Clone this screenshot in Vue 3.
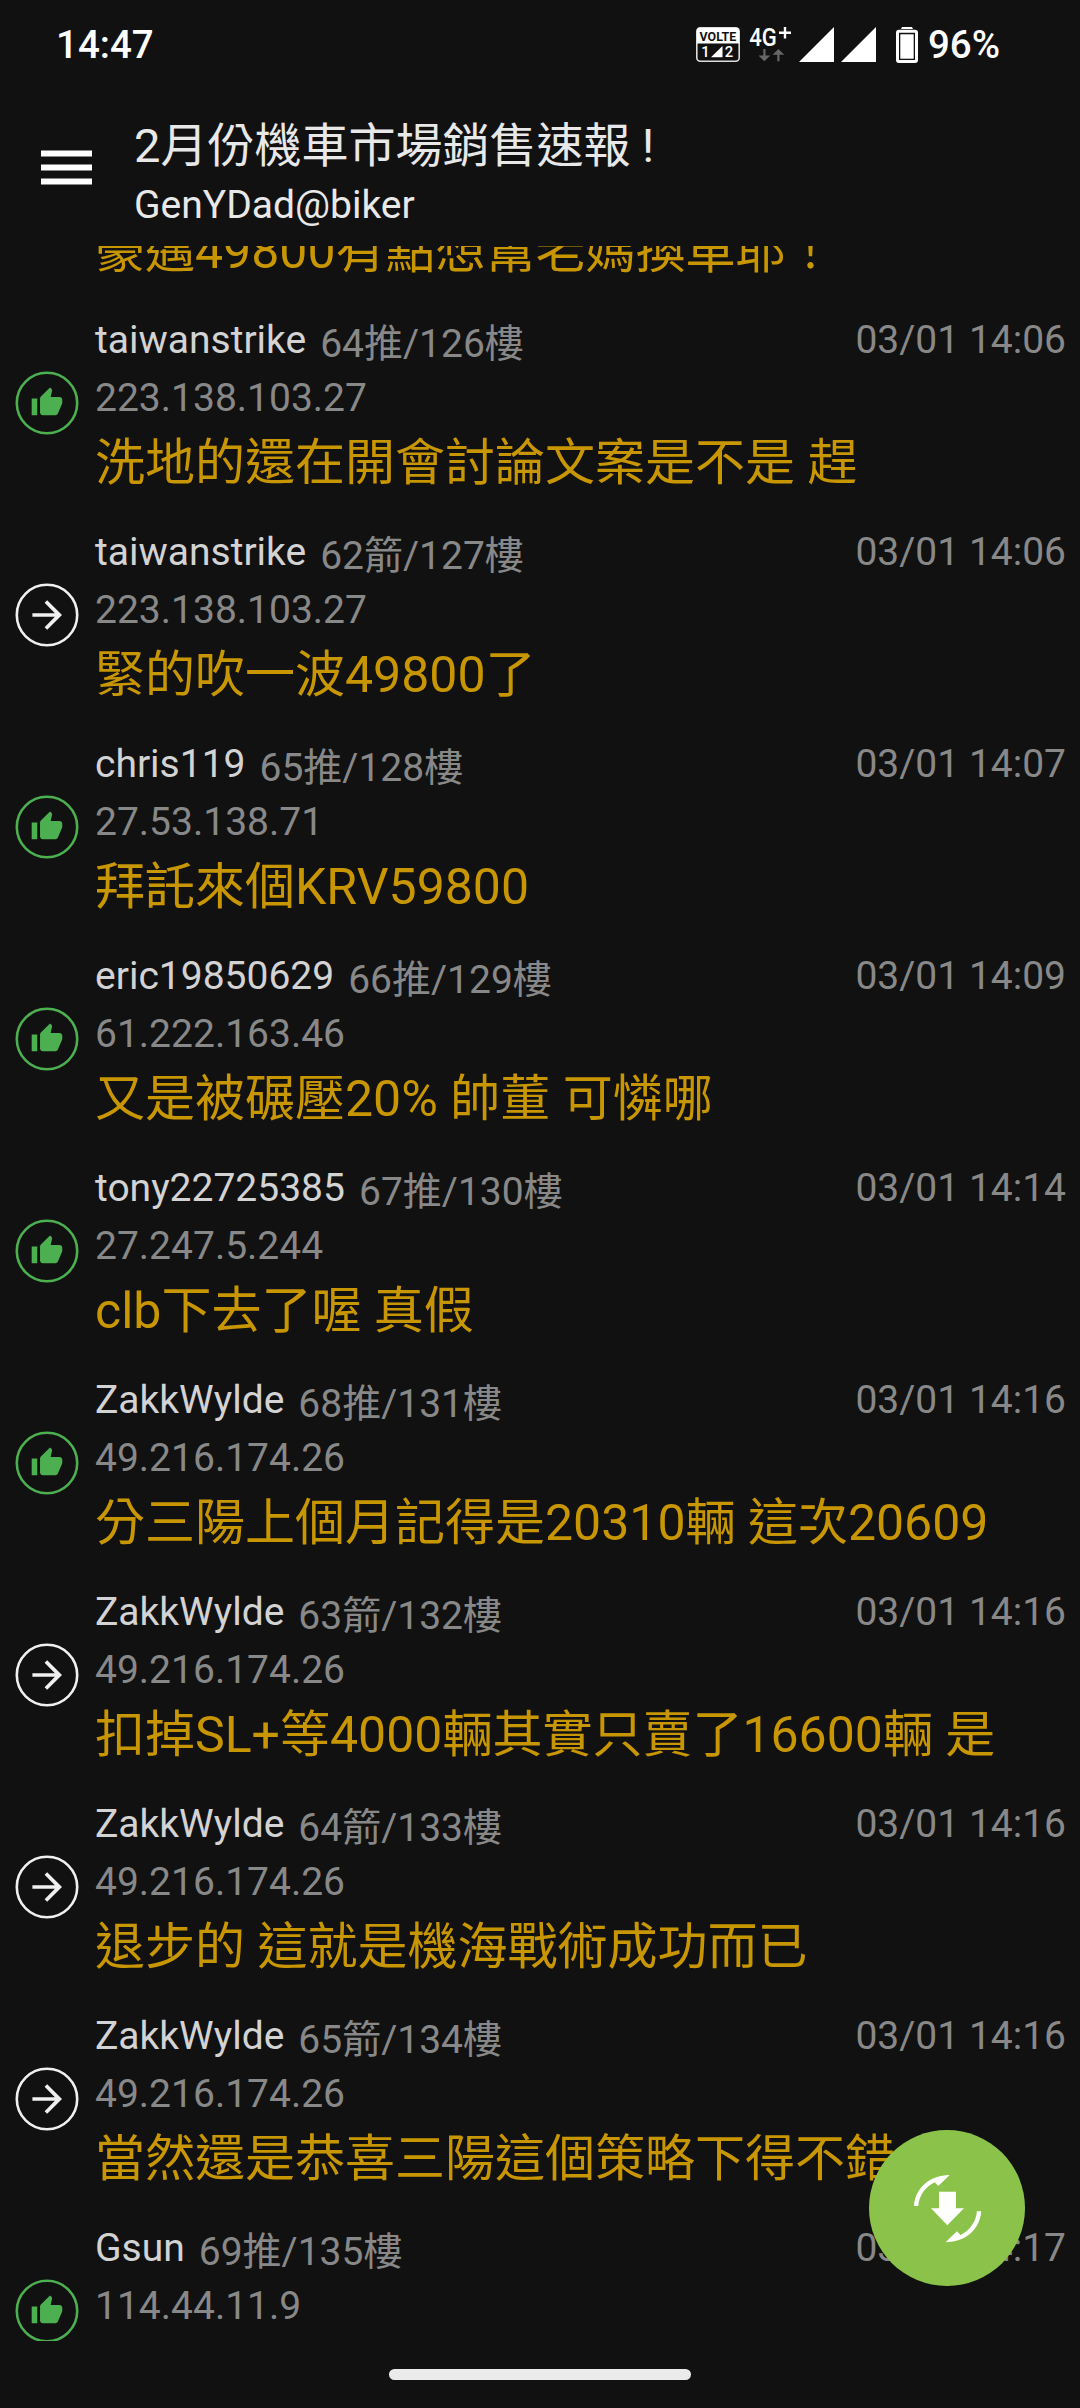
<script setup>
const comments = [
  { user: '', count: '', time: '', ip: '', text: '豪邁49800有點想幫老媽換車耶！', type: '' },
  { user: 'taiwanstrike', count: '64推/126樓', time: '03/01 14:06', ip: '223.138.103.27', text: '洗地的還在開會討論文案是不是 趕', type: 'push' },
  { user: 'taiwanstrike', count: '62箭/127樓', time: '03/01 14:06', ip: '223.138.103.27', text: '緊的吹一波49800了', type: 'arrow' },
  { user: 'chris119', count: '65推/128樓', time: '03/01 14:07', ip: '27.53.138.71', text: '拜託來個KRV59800', type: 'push' },
  { user: 'eric19850629', count: '66推/129樓', time: '03/01 14:09', ip: '61.222.163.46', text: '又是被碾壓20% 帥董 可憐哪', type: 'push' },
  { user: 'tony22725385', count: '67推/130樓', time: '03/01 14:14', ip: '27.247.5.244', text: 'clb下去了喔 真假', type: 'push' },
  { user: 'ZakkWylde', count: '68推/131樓', time: '03/01 14:16', ip: '49.216.174.26', text: '分三陽上個月記得是20310輛 這次20609', type: 'push' },
  { user: 'ZakkWylde', count: '63箭/132樓', time: '03/01 14:16', ip: '49.216.174.26', text: '扣掉SL+等4000輛其實只賣了16600輛 是', type: 'arrow' },
  { user: 'ZakkWylde', count: '64箭/133樓', time: '03/01 14:16', ip: '49.216.174.26', text: '退步的 這就是機海戰術成功而已', type: 'arrow' },
  { user: 'ZakkWylde', count: '65箭/134樓', time: '03/01 14:16', ip: '49.216.174.26', text: '當然還是恭喜三陽這個策略下得不錯', type: 'arrow' },
  { user: 'Gsun', count: '69推/135樓', time: '03/01 14:17', ip: '114.44.11.9', text: '', type: 'push' },
]
</script>

<template>
  <div class="screen" lang="zh-Hant">
    <div class="status">
      <span class="clock">14:47</span>
      <div class="indicators">
        <svg class="volte" width="44" height="35" viewBox="0 0 44 35">
          <rect x="0.8" y="0.8" width="42.4" height="33.4" rx="3.5" fill="none" stroke="#ddd" stroke-width="1.6" />
          <path d="M1 3.5Q1 1 3.5 1H40.5Q43 1 43 3.5V16.5H1Z" fill="#fff" />
          <text x="3.6" y="13.600" font-size="12.8" font-weight="700" fill="#111" textLength="36.5" lengthAdjust="spacingAndGlyphs">VOLTE</text>
          <text x="5.2" y="30.3" font-size="14.8" font-weight="500" fill="#fff">1</text>
          <path d="M15 30.300L26.500 19V30.300Z" fill="#fff" />
          <text x="28.8" y="30.3" font-size="14.8" font-weight="500" fill="#fff">2</text>
        </svg>
        <svg class="network" width="44" height="37" viewBox="0 0 44 37">
          <text x="0.3" y="19" font-size="25.7" fill="#fff" textLength="27.5" lengthAdjust="spacingAndGlyphs">4G</text>
          <path d="M36 0V11.600M30 5.800H42" stroke="#fff" stroke-width="2.400" />
          <path d="M14.300 22H16.500V28.500H21.300L15.400 34.300L9.500 28.500H14.300Z" fill="#666" />
          <path d="M28.300 34.300H30.500V27.800H35.300L29.400 22L23.500 27.800H28.300Z" fill="#666" />
        </svg>
        <svg class="signal" width="35" height="35" viewBox="0 0 35 35"><path d="M0 35L35 0V35Z" fill="#fff" /></svg>
        <svg class="signal" width="35" height="35" viewBox="0 0 35 35"><path d="M0 35L35 0V35Z" fill="#fff" /></svg>
        <svg class="battery" width="22" height="36" viewBox="0 0 22 36">
          <path d="M6 0H16L17 2H5Z" fill="#fff" />
          <rect x="1.5" y="4.3" width="19" height="30.2" rx="1.5" fill="none" stroke="#fff" stroke-width="3" />
          <rect x="4.300" y="7.300" width="13.400" height="24.400" fill="#fff" />
        </svg>
        <span class="percent">96%</span>
      </div>
    </div>

    <header class="bar">
      <svg class="menu" width="51" height="35" viewBox="0 0 51 35">
        <path d="M0 .4H51V6.600H0ZM0 14.400H51V20.600H0ZM0 28.400H51V34.600H0Z" fill="#fff" />
      </svg>
      <div class="titles">
        <h1>2月份機車市場銷售速報 !</h1>
        <p>GenYDad@biker</p>
      </div>
    </header>

    <main class="list">
      <article v-for="(c, i) in comments" :key="i" class="item">
        <div class="side">
          <svg v-if="c.type === 'push'" width="64" height="64" viewBox="0 0 64 64">
            <circle cx="32" cy="32" r="30.2" fill="none" stroke="#4caf50" stroke-width="2.6" />
            <g transform="translate(15.300 15) scale(1.390)" fill="#4caf50">
              <path d="M1 21h4V9H1v12zm22-11c0-1.100-.9-2-2-2h-6.310l.95-4.570.03-.32c0-.41-.17-.79-.44-1.060L14.170 1 7.590 7.590C7.220 7.950 7 8.450 7 9v10c0 1.100.9 2 2 2h9c.83 0 1.540-.5 1.840-1.220l3.020-7.050c.09-.23.14-.47.14-.73v-2z" />
            </g>
          </svg>
          <svg v-else-if="c.type === 'arrow'" width="64" height="64" viewBox="0 0 64 64">
            <circle cx="32" cy="32" r="30.2" fill="none" stroke="#f0f0f0" stroke-width="2.6" />
            <g transform="translate(10 9.800) scale(1.850)" fill="#f0f0f0">
              <path d="M12 4l-1.410 1.410L16.170 11H4v2h12.170l-5.580 5.590L12 20l8-8z" />
            </g>
          </svg>
        </div>
        <div class="body">
          <div class="meta">
            <span class="user">{{ c.user }}</span>
            <span class="count">{{ c.count }}</span>
            <span class="time">{{ c.time }}</span>
          </div>
          <div class="ip">{{ c.ip }}</div>
          <div class="text">{{ c.text }}</div>
        </div>
      </article>
    </main>

    <div class="nav"><div class="pill"></div></div>

    <button class="fab" aria-label="更新">
      <svg width="156" height="156" viewBox="0 0 156 156" fill="#fff">
        <path d="M70 61.700H87V78.300H95L78.300 95.300L62 78.300H70Z" />
        <path d="M45 76C46 59 60 45 80.700 45L69.300 55.900L65.700 52.300C56 57 50 66 49.300 76Z" />
        <path d="M45 76C46 59 60 45 80.700 45L69.300 55.900L65.700 52.300C56 57 50 66 49.300 76Z" transform="rotate(180 78.600 78.600)" />
      </svg>
    </button>
  </div>
</template>

<style>
body {
  margin: 0;
  background: #111;
}
</style>

<style scoped>
.screen {
  position: relative;
  display: flex;
  flex-direction: column;
  width: 1080px;
  height: 2408px;
  overflow: hidden;
  background: #111;
  color: #e8e8e8;
  font-family: Roboto, "Noto Sans CJK TC", sans-serif;
  font-size: 39px;
  line-height: 46px;
  white-space: nowrap;
}
.status {
  display: flex;
  flex: none;
  justify-content: space-between;
  height: 90px;
  padding: 22px 80px 0 56px;
  box-sizing: border-box;
  color: #fff;
  font-size: 38.5px;
  font-weight: 500;
}
.indicators {
  display: flex;
  align-items: flex-start;
}
.indicators svg {
  flex: none;
  margin-top: 5px;
}
.volte {
  margin-right: 9px;
}
.network {
  margin-right: 6px;
}
.signal {
  margin-right: 7px;
}
.battery {
  margin-left: 13px;
  margin-right: 10px;
}
.bar {
  display: flex;
  flex: none;
  height: 156px;
}
.menu {
  flex: none;
  margin: 60px 42px 0 41px;
}
.titles {
  padding-top: 28px;
}
h1 {
  margin: 0;
  font-size: 47px;
  font-weight: 400;
  line-height: 56px;
}
p {
  margin: 8px 0 0;
}
.list {
  flex: none;
  height: 2095px;
  overflow: hidden;
}
.item {
  display: flex;
  height: 212px;
}
.item:first-child {
  margin-top: -156px;
}
.side {
  flex: none;
  width: 80px;
  padding: 68.5px 0 0 15.3px;
  box-sizing: border-box;
}
.side svg {
  display: block;
}
.body {
  flex: 1;
  padding: 15px 14px 0 15px;
}
.meta {
  display: flex;
  height: 46px;
}
.user {
  color: #d3d3d3;
}
.count {
  margin: 4px 0 0 14px;
  color: #888;
}
.time {
  margin-left: auto;
  color: #888;
}
.ip {
  height: 46px;
  margin-top: 12px;
  color: #888;
}
.text {
  margin-top: 12px;
  color: #c89600;
  font-size: 50px;
  line-height: 60px;
}
.nav {
  display: flex;
  justify-content: center;
  padding-top: 28px;
}
.pill {
  width: 302px;
  height: 11px;
  border-radius: 5.5px;
  background: #ebebeb;
}
.fab {
  position: absolute;
  left: 869px;
  top: 2130px;
  width: 156px;
  height: 156px;
  padding: 0;
  border: 0;
  border-radius: 50%;
  background: #8bc34a;
}
.fab svg {
  display: block;
}
</style>
